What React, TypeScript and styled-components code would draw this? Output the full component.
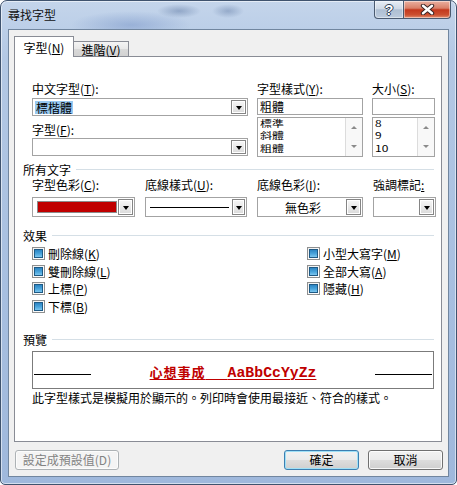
import React from 'react';
import styled, { createGlobalStyle } from 'styled-components';

const FONT = `"Noto Sans CJK TC", "Liberation Sans", sans-serif`;

const GlobalStyle = createGlobalStyle`
  html, body { margin: 0; padding: 0; background: #ffffff; }
  body { font-family: ${FONT}; font-size: 12px; color: #000; }
  * { box-sizing: border-box; }
`;

const Window = styled.div`
  width: 457px;
  height: 485px;
  border: 1px solid #3f536e;
  border-radius: 7px 7px 5px 5px;
  background:
    radial-gradient(ellipse 22px 7px at 178px 10px, rgba(105, 130, 170, 0.55), transparent),
    radial-gradient(ellipse 16px 7px at 227px 10px, rgba(105, 130, 170, 0.5), transparent),
    radial-gradient(ellipse 60px 14px at 130px 24px, rgba(110, 140, 195, 0.45), transparent),
    linear-gradient(180deg, #c4d5eb 0%, #b3c8e4 12%, #a7bfe0 60%, #9fb8dc 100%);
  box-shadow: inset 0 0 0 1px rgba(255, 255, 255, 0.55);
  display: flex;
  flex-direction: column;
  overflow: hidden;
`;

const TitleBar = styled.div`
  height: 28px;
  display: flex;
  align-items: flex-start;
`;

const TitleText = styled.div`
  padding-left: 7px;
  line-height: 28px;
  font-size: 12px;
  color: #101010;
`;

const CapButtons = styled.div`
  margin-left: auto;
  margin-right: 5px;
  display: flex;
`;

const CapButton = styled.div<{ $variant: 'help' | 'close' }>`
  width: ${(p) => (p.$variant === 'close' ? 47 : 30)}px;
  height: 18px;
  border: 1px solid #4a5a70;
  border-top: none;
  border-left-width: ${(p) => (p.$variant === 'close' ? 0 : 1)}px;
  border-radius: ${(p) => (p.$variant === 'close' ? '0 0 4px 0' : '0 0 0 4px')};
  background: ${(p) =>
    p.$variant === 'close'
      ? 'linear-gradient(180deg, #eab0a0 0%, #d98069 42%, #c3381d 52%, #cc5030 82%, #e39173 100%)'
      : 'linear-gradient(180deg, #e6edf5 0%, #cfd9e6 45%, #aebfd3 52%, #bccbdd 100%)'};
  box-shadow: inset 0 0 0 1px rgba(255, 255, 255, 0.45);
  display: flex;
  align-items: center;
  justify-content: center;
`;

const HelpGlyph = styled.span`
  font-family: "Liberation Sans", sans-serif;
  font-weight: bold;
  font-size: 14px;
  line-height: 14px;
  color: #ffffff;
  text-shadow: 1px 0 0 #2f3f55, -1px 0 0 #2f3f55, 0 1px 0 #2f3f55, 0 -1px 0 #2f3f55;
`;

const Client = styled.div`
  margin: 0 7px 7px 7px;
  height: 448px;
  border: 1px solid #71869f;
  background: #f0f0f0;
  padding: 6px 6px 0 5px;
  display: flex;
  flex-direction: column;
`;

const TabRow = styled.div`
  display: flex;
  align-items: flex-end;
  height: 21px;
  margin-bottom: -1px;
  position: relative;
  z-index: 1;
`;

const Tab = styled.div<{ $active?: boolean }>`
  height: ${(p) => (p.$active ? 21 : 15)}px;
  width: ${(p) => (p.$active ? 60 : 56)}px;
  margin-bottom: ${(p) => (p.$active ? 0 : 1)}px;
  margin-left: ${(p) => (p.$active ? 0 : -1)}px;
  border: 1px solid #898c95;
  border-bottom: none;
  background: ${(p) => (p.$active ? '#ffffff' : 'linear-gradient(180deg, #f4f4f4 0%, #e8e8e8 50%, #d9d9d9 51%, #d2d2d2 100%)')};
  position: relative;
  z-index: ${(p) => (p.$active ? 2 : 1)};
  display: flex;
  align-items: center;
  justify-content: center;
  padding-top: ${(p) => (p.$active ? 0 : 1)}px;
  white-space: nowrap;
`;

const Panel = styled.div`
  width: 428px;
  height: 386px;
  border: 1px solid #898c95;
  background: #ffffff;
  padding: 24px 6px 0 8px;
  display: flex;
  flex-direction: column;
`;

const Indented = styled.div<{ $mt?: number }>`
  margin-left: 9px;
  margin-top: ${(p) => p.$mt ?? 0}px;
`;

const FontGrid = styled(Indented)`
  display: grid;
  grid-template-columns: 216px 106px 63px;
  column-gap: 9px;
  align-items: start;
`;

const ColorGrid = styled(Indented)`
  display: grid;
  grid-template-columns: 103px 102px 106px 63px;
  column-gap: 10px;
`;

const Col = styled.div`
  display: flex;
  flex-direction: column;
`;

const Label = styled.div<{ $mt?: number }>`
  height: 16px;
  line-height: 16px;
  white-space: nowrap;
  margin-top: ${(p) => p.$mt ?? 0}px;
`;

const Mn = styled.span`
  & u {
    text-decoration: underline;
    text-underline-offset: 1px;
  }
`;

const Key = ({ k }: { k: string }) => (
  <Mn>
    (<u>{k}</u>)
  </Mn>
);

const Combo = styled.div<{ $h: number; $mt?: number }>`
  height: ${(p) => p.$h}px;
  margin-top: ${(p) => p.$mt ?? 0}px;
  border: 1px solid #a3a3a3;
  background: #ffffff;
  padding: 1px;
  display: flex;
  align-items: stretch;
`;

const ComboText = styled.div<{ $center?: boolean }>`
  flex: 1;
  display: flex;
  align-items: center;
  justify-content: ${(p) => (p.$center ? 'center' : 'flex-start')};
  padding-left: 1px;
  line-height: 13px;
  white-space: nowrap;
`;

const Selected = styled.span`
  background: #99c9f1;
  padding: 0 1px;
`;

const ArrowButton = styled.div`
  width: 15px;
  border: 1px solid #858585;
  background: linear-gradient(180deg, #f7f7f7 0%, #e9e9e9 50%, #dadada 100%);
  box-shadow: inset 0 0 0 1px #ffffff;
  display: flex;
  align-items: center;
  justify-content: center;
  padding-top: 1px;
  &::after {
    content: '';
    border-left: 3.5px solid transparent;
    border-right: 3.5px solid transparent;
    border-top: 4px solid #000000;
  }
`;

const TextBox = styled.div<{ $mt?: number }>`
  height: 17px;
  margin-top: ${(p) => p.$mt ?? 0}px;
  border: 1px solid #a3a3a3;
  padding-left: 2px;
  line-height: 15px;
`;

const ListBox = styled.div`
  height: 40px;
  margin-top: 2px;
  border: 1px solid #a3a3a3;
  display: flex;
`;

const ListItems = styled.div`
  flex: 1;
  padding-left: 2px;
  margin-top: -1px;
`;

const ListItem = styled.div`
  height: 12.67px;
  display: flex;
  align-items: center;
`;

const ListText = styled.span`
  display: inline-block;
  font-size: 12px;
  line-height: 17px;
  transform: scaleY(0.72);
`;

const Scroll = styled.div`
  width: 17px;
  border-left: 1px solid #dcdcdc;
  background: #f8f8f8;
  display: flex;
  flex-direction: column;
`;

const ScrollArrow = styled.div<{ $dir: 'up' | 'down' }>`
  flex: 1;
  display: flex;
  align-items: center;
  justify-content: center;
  &::after {
    content: '';
    border-left: 3px solid transparent;
    border-right: 3px solid transparent;
    ${(p) => (p.$dir === 'up' ? 'border-bottom: 3px solid #8a8a8a;' : 'border-top: 3px solid #8a8a8a;')}
  }
`;

const SectionHead = styled.div<{ $mt: number; $h: number }>`
  display: flex;
  align-items: center;
  gap: 5px;
  height: ${(p) => p.$h}px;
  margin-top: ${(p) => p.$mt}px;
  white-space: nowrap;
  &::after {
    content: '';
    flex: 1;
    height: 1px;
    margin-right: 1px;
    background: #d5dfe6;
  }
`;

const Swatch = styled.div<{ $color: string }>`
  flex: 1;
  align-self: center;
  height: 12px;
  margin: 0 1px 0 3px;
  border: 1px solid #8c8c8c;
  background: ${(p) => p.$color};
`;

const LineSample = styled.div`
  flex: 1;
  display: flex;
  align-items: center;
  padding: 0 3px 0 3px;
  &::after {
    content: '';
    width: 79px;
    height: 1px;
    background: #000;
  }
`;

const CheckGrid = styled(Indented)`
  display: grid;
  grid-template-columns: 275px 1fr;
  grid-template-rows: repeat(4, 17.5px);
  grid-auto-flow: column;
`;

const CheckItem = styled.div`
  display: flex;
  align-items: center;
  gap: 3px;
  white-space: nowrap;
`;

const CheckBox = styled.span`
  width: 13px;
  height: 13px;
  border: 1px solid #8e8f8f;
  background: linear-gradient(135deg, #f0f0f0, #ffffff);
  padding: 1px;
  display: flex;
  &::after {
    content: '';
    flex: 1;
    border: 1px solid #1e5a85;
    background: linear-gradient(180deg, #2b84c2 0%, #4aa5dc 55%, #7cc6ee 100%);
  }
`;

const PreviewBox = styled(Indented)`
  width: 402px;
  height: 38px;
  border: 1px solid #7b7b7b;
  display: flex;
  align-items: flex-start;
  padding: 0 1px;
`;

const BaseLine = styled.div`
  width: 57px;
  height: 1px;
  margin-top: 22px;
  background: #000;
`;

const Sample = styled.div`
  flex: 1;
  text-align: center;
  margin-top: 11px;
  line-height: 17px;
  color: #c00000;
  font-weight: bold;
  white-space: pre;
  text-decoration: underline;
  text-decoration-thickness: 1px;
  text-underline-offset: 2px;
`;

const SampleCjk = styled.span`
  font-family: ${FONT};
  font-size: 13px;
  letter-spacing: 1px;
`;

const SampleGap = styled.span`
  font-family: ${FONT};
  font-size: 13px;
  letter-spacing: 9px;
`;

const SampleLatin = styled.span`
  font-family: "Liberation Mono", monospace;
  font-size: 14.8px;
`;

const Note = styled(Indented)`
  line-height: 16px;
  white-space: nowrap;
`;

const ButtonRow = styled.div`
  margin-top: 8px;
  margin-left: 1px;
  margin-right: -1px;
  display: flex;
  align-items: center;
  gap: 9px;
`;

const PushButton = styled.button<{ $w: number; $default?: boolean; $push?: boolean }>`
  width: ${(p) => p.$w}px;
  height: 20px;
  padding: 0;
  margin-left: ${(p) => (p.$push ? 'auto' : '0')};
  font-family: ${FONT};
  font-size: 12px;
  line-height: 16px;
  color: #000;
  border: 1px solid ${(p) => (p.$default ? '#3c7fb1' : '#707070')};
  border-radius: 3px;
  background: linear-gradient(180deg, #f2f2f2 0%, #ebebeb 49%, #dddddd 50%, #cfcfcf 100%);
  box-shadow: inset 0 0 0 1px ${(p) => (p.$default ? '#9fe0f7' : 'rgba(255,255,255,0.85)')};
  &:disabled {
    border-color: #adb2b5;
    background: #f4f4f4;
    color: #838383;
    box-shadow: inset 0 0 0 1px #fcfcfc;
  }
`;

const CloseIcon = () => (
  <svg width="15" height="11" viewBox="0 0 15 11">
    <path d="M3 1.8 L12 9.2 M12 1.8 L3 9.2" stroke="#3b2626" strokeWidth="4.4" strokeLinecap="round" fill="none" />
    <path d="M3 1.8 L12 9.2 M12 1.8 L3 9.2" stroke="#ffffff" strokeWidth="2.4" strokeLinecap="round" fill="none" />
  </svg>
);

const Check = ({ text, k }: { text: string; k: string }) => (
  <CheckItem>
    <CheckBox />
    <span>
      {text}
      <Key k={k} />
    </span>
  </CheckItem>
);

const List = ({ items }: { items: string[] }) => (
  <ListBox>
    <ListItems>
      {items.map((it) => (
        <ListItem key={it}>
          <ListText>{it}</ListText>
        </ListItem>
      ))}
    </ListItems>
    <Scroll>
      <ScrollArrow $dir="up" />
      <ScrollArrow $dir="down" />
    </Scroll>
  </ListBox>
);

export default function App() {
  return (
    <>
      <GlobalStyle />
      <Window>
        <TitleBar>
          <TitleText>尋找字型</TitleText>
          <CapButtons>
            <CapButton $variant="help">
              <HelpGlyph>?</HelpGlyph>
            </CapButton>
            <CapButton $variant="close">
              <CloseIcon />
            </CapButton>
          </CapButtons>
        </TitleBar>
        <Client>
          <TabRow>
            <Tab $active>
              <span>
                字型<Key k="N" />
              </span>
            </Tab>
            <Tab>
              <span>
                進階<Key k="V" />
              </span>
            </Tab>
          </TabRow>
          <Panel>
            <FontGrid>
              <Col>
                <Label>
                  中文字型<Key k="T" />:
                </Label>
                <Combo $h={18} $mt={1}>
                  <ComboText>
                    <Selected>標楷體</Selected>
                  </ComboText>
                  <ArrowButton />
                </Combo>
                <Label $mt={6}>
                  字型<Key k="F" />:
                </Label>
                <Combo $h={18}>
                  <ComboText />
                  <ArrowButton />
                </Combo>
              </Col>
              <Col>
                <Label>
                  字型樣式<Key k="Y" />:
                </Label>
                <TextBox $mt={1}>粗體</TextBox>
                <List items={['標準', '斜體', '粗體']} />
              </Col>
              <Col>
                <Label>
                  大小<Key k="S" />:
                </Label>
                <TextBox $mt={1} />
                <List items={['8', '9', '10']} />
              </Col>
            </FontGrid>

            <SectionHead $mt={5} $h={15}>所有文字</SectionHead>
            <ColorGrid>
              <Col>
                <Label>
                  字型色彩<Key k="C" />:
                </Label>
                <Combo $h={20} $mt={4}>
                  <Swatch $color="#c00000" />
                  <ArrowButton />
                </Combo>
              </Col>
              <Col>
                <Label>
                  底線樣式<Key k="U" />:
                </Label>
                <Combo $h={20} $mt={4}>
                  <LineSample />
                  <ArrowButton />
                </Combo>
              </Col>
              <Col>
                <Label>
                  底線色彩<Key k="I" />:
                </Label>
                <Combo $h={20} $mt={4}>
                  <ComboText $center>無色彩</ComboText>
                  <ArrowButton />
                </Combo>
              </Col>
              <Col>
                <Label>
                  強調標記<Mn>
                    <u>:</u>
                  </Mn>
                </Label>
                <Combo $h={20} $mt={4}>
                  <ComboText />
                  <ArrowButton />
                </Combo>
              </Col>
            </ColorGrid>

            <SectionHead $mt={10} $h={16}>效果</SectionHead>
            <CheckGrid $mt={2}>
              <Check text="刪除線" k="K" />
              <Check text="雙刪除線" k="L" />
              <Check text="上標" k="P" />
              <Check text="下標" k="B" />
              <Check text="小型大寫字" k="M" />
              <Check text="全部大寫" k="A" />
              <Check text="隱藏" k="H" />
            </CheckGrid>

            <SectionHead $mt={16} $h={16}>預覽</SectionHead>
            <PreviewBox $mt={4}>
              <BaseLine />
              <Sample>
                <SampleCjk>心想事成</SampleCjk>
                <SampleGap>{'\u3000'}</SampleGap>
                <SampleLatin>AaBbCcYyZz</SampleLatin>
              </Sample>
              <BaseLine />
            </PreviewBox>
            <Note $mt={1}>此字型樣式是模擬用於顯示的。列印時會使用最接近、符合的樣式。</Note>
          </Panel>
          <ButtonRow>
            <PushButton $w={104} disabled>
              設定成預設值(D)
            </PushButton>
            <PushButton $w={75} $default $push>
              確定
            </PushButton>
            <PushButton $w={75}>取消</PushButton>
          </ButtonRow>
        </Client>
      </Window>
    </>
  );
}
